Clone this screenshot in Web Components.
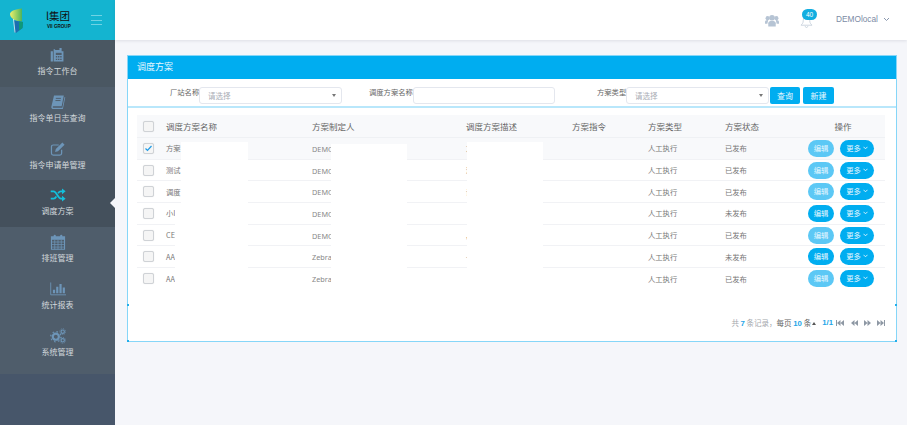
<!DOCTYPE html>
<html lang="zh">
<head>
<meta charset="utf-8">
<title>调度方案</title>
<style>
  html, body { margin: 0; height: 425px; overflow: hidden; background: #f5f6fa; }
  body { font-family: "Liberation Sans", "Noto Sans CJK SC", sans-serif; display: flex; width: 907px; }
</style>
</head>
<body>
<side-bar>
  <side-item icon="phone">指令工作台</side-item>
  <side-item icon="book">指令单日志查询</side-item>
  <side-item icon="edit">指令申请单管理</side-item>
  <side-item icon="shuffle" active>调度方案</side-item>
  <side-item icon="calendar">排班管理</side-item>
  <side-item icon="chart">统计报表</side-item>
  <side-item icon="cogs" last>系统管理</side-item>
</side-bar>
<main-area>
  <top-bar></top-bar>
  <plan-panel>
    <filter-bar></filter-bar>
    <plan-table>
      <plan-row name="方案" maker="DEMO" desc="方案" type="人工执行" status="已发布" checked selected></plan-row>
      <plan-row name="测试" maker="DEMO" desc="测试" type="人工执行" status="已发布"></plan-row>
      <plan-row name="调度" maker="DEMO" desc="调度" type="人工执行" status="已发布"></plan-row>
      <plan-row name="小I" maker="DEMO" type="人工执行" status="未发布" live></plan-row>
      <plan-row name="CE" maker="DEMO" desc="," type="人工执行" status="已发布"></plan-row>
      <plan-row name="AA" maker="Zebra" desc="-" type="人工执行" status="未发布" live></plan-row>
      <plan-row name="AA" maker="Zebra" type="人工执行" status="已发布" last></plan-row>
    </plan-table>
    <page-bar></page-bar>
  </plan-panel>
</main-area>

<script>
const ICONS = {
  phone: `<path d="M1 6h3v14H1zM5 3h2v1h6V1.500h3V6h2.500v14H5z" fill="currentColor"/><rect x="8" y="8" width="8" height="3" fill="#4f5d6b"/><path d="M8 12.500h2v2H8zm3 0h2v2h-2zm3 0h2v2h-2zM8 16h2v2H8zm3 0h2v2h-2zm3 0h2v2h-2z" fill="#4f5d6b"/>`,
  book: `<path d="M5.500 2H19l-3 15H4.500c-1 0-1 2 0 2H17l3-15 1 .5-3.300 16H3.500C2 20.500 1.500 19 2 17z" fill="currentColor"/><path d="M8 6h7M7.500 9h7" stroke="#4f5d6b" stroke-width="1.300"/>`,
  edit: `<path d="M16 12v5a2.500 2.500 0 0 1-2.500 2.500h-9A2.500 2.500 0 0 1 2 17V8a2.500 2.500 0 0 1 2.500-2.500H12" fill="none" stroke="currentColor" stroke-width="1.700"/><path d="M8 11l9-9 3 3-9 9-4 1z" fill="currentColor"/>`,
  shuffle: `<path d="M1 6h4c4 0 6 10 10 10h2M1 16h4c1.500 0 2.800-1.300 3.800-3M11 8.500C12.200 7 13.500 6 15 6h2" fill="none" stroke="currentColor" stroke-width="2.400"/><path d="M16.500 2l5 4-5 4zM16.500 12l5 4-5 4z" fill="currentColor"/>`,
  calendar: `<path d="M2 4h18v17H2z" fill="none" stroke="currentColor" stroke-width="1.500"/><path d="M2 4h18v4H2z" fill="currentColor"/><rect x="5" y="1" width="3" height="5" rx="1.500" fill="currentColor"/><rect x="14" y="1" width="3" height="5" rx="1.500" fill="currentColor"/><path d="M2 11h18M2 14.500h18M2 18h18M6.500 8v13M11 8v13M15.500 8v13" stroke="currentColor" stroke-width="1"/>`,
  chart: `<path d="M1 2v17h21" fill="none" stroke="currentColor" stroke-width="1.200"/><path d="M4 12h3v5H4zM8.500 8h3v9h-3zM13 4h3v13h-3zM17.500 9h3v8h-3z" fill="currentColor"/>`,
  cogs: `<g fill="none" stroke="currentColor"><circle cx="8" cy="12" r="4.200" stroke-width="3"/><circle cx="8" cy="12" r="7" stroke-width="1.600" stroke-dasharray="2.200 3.300"/><circle cx="17.500" cy="5" r="2.300" stroke-width="1.600"/><circle cx="17.500" cy="5" r="4" stroke-width="1.100" stroke-dasharray="1.500 1.600"/><circle cx="17.500" cy="17" r="2.300" stroke-width="1.600"/><circle cx="17.500" cy="17" r="4" stroke-width="1.100" stroke-dasharray="1.500 1.600"/></g>`
};

class SideBar extends HTMLElement {
  constructor() {
    super();
    this.attachShadow({mode: 'open'}).innerHTML = `
    <style>
      :host { display: flex; flex-direction: column; width: 115px; height: 425px; flex: none; background: #47566a; }
      .logo { height: 40px; background: #14b4d0; display: flex; align-items: center; flex: none; }
      svg.mark { margin-left: 9px; flex: none; }
      .brand { margin-left: 23px; width: 30px; color: #111; text-align: left; }
      .brand b { display: block; font: 400 10.500px/13px "Noto Sans CJK SC", sans-serif; white-space: nowrap; margin-left: -1px; margin-top: -1px; }
      .brand i { display: block; font: 700 4.600px/7px "Liberation Sans", sans-serif; font-style: normal; white-space: nowrap; margin-top: 1px; }
      .burger { margin-left: 14px; width: 11px; height: 8px; border-top: 1px solid #6fd3e4; border-bottom: 1px solid #6fd3e4; position: relative; }
      .burger::after { content: ""; position: absolute; left: 0; right: 0; top: 3.500px; height: 1px; background: #6fd3e4; }
      .list { display: flex; flex-direction: column; }
      .list ::slotted(side-item:first-child) { background: #4a5762; }
    </style>
    <div class="logo">
      <svg class="mark" width="15" height="25" viewBox="0 0 15 25">
        <defs><linearGradient id="lg" x1="0" y1="0" x2="1" y2="0"><stop offset="0" stop-color="#eef06a"/><stop offset="1" stop-color="#4fb35c"/></linearGradient></defs>
        <path d="M1 6C1 3 7 1 13 .500V13.500C8 13.500 1 11 1 6z" fill="url(#lg)"/>
        <path d="M5 12.500l9 1.500-.500 6L7 25l-1.500-1z" fill="#1a6fb0"/>
        <path d="M10 13.500l4 .5-.500 6-3.500 2.500z" fill="#0d9a78"/>
        <path d="M4.500 11L6 24.500" stroke="#e8f6f8" stroke-width=".8" fill="none"/>
      </svg>
      <div class="brand"><b>l集团</b><i>VII GROUP</i></div>
      <div class="burger"></div>
    </div>
    <div class="list"><slot></slot></div>`;
  }
}
customElements.define('side-bar', SideBar);

class SideItem extends HTMLElement {
  constructor() {
    super();
    this.attachShadow({mode: 'open'});
  }
  connectedCallback() {
    const icon = this.getAttribute('icon');
    this.shadowRoot.innerHTML = `
    <style>
      :host { display: flex; flex-direction: column; align-items: center; height: 46.800px; box-sizing: border-box; padding-top: 7px; background: #4f5d6b; position: relative; color: #d3d8dc; }
      :host([active]) { background: #44505c; }
      :host([last]) { height: 53px; }
      svg { width: 16px; height: 16px; color: #6d95b8; display: block; }
      :host([active]) svg { color: #12c0dc; }
      span { font: 8px/12px "Noto Sans CJK SC", sans-serif; margin-top: 2px; white-space: nowrap; }
      .tip { position: absolute; right: 0; top: 18px; width: 0; height: 0; border: 5px solid transparent; border-right-color: #f5f6fa; border-left-width: 0; display: none; }
      :host([active]) .tip { display: block; }
    </style>
    <svg viewBox="0 0 22 22">${ICONS[icon]}</svg>
    <span><slot></slot></span>
    <div class="tip"></div>`;
  }
}
customElements.define('side-item', SideItem);

class MainArea extends HTMLElement {
  constructor() {
    super();
    this.attachShadow({mode: 'open'}).innerHTML = `
    <style>:host { display: flex; flex-direction: column; flex: 1; min-width: 0; height: 425px; }</style>
    <slot></slot>`;
  }
}
customElements.define('main-area', MainArea);

class TopBar extends HTMLElement {
  constructor() {
    super();
    this.attachShadow({mode: 'open'}).innerHTML = `
    <style>
      :host { display: flex; align-items: center; height: 40px; flex: none; background: #fff; box-shadow: 0 1px 3px rgba(60,70,90,.13); box-sizing: border-box; padding-left: 650px; color: #7c8ba5; position: relative; }
      .bell { position: relative; margin-left: 21px; width: 13px; height: 13px; margin-top: 3px; }
      .bell svg { display: block; }
      .badge { position: absolute; left: 2px; top: -6px; width: 15px; height: 11px; border-radius: 6px; background: #12aee0; color: #fff; font: 6.500px/11px "Liberation Sans", sans-serif; text-align: center; }
      .name { font: 8.300px/12px "Liberation Sans", sans-serif; margin: -2px 0 0 23px; white-space: nowrap; }
      svg.chev { margin: -1px 0 0 5px; }
    </style>
    <svg width="14" height="13" viewBox="0 0 15 13"><g fill="#b6c4d4"><circle cx="7.500" cy="3.500" r="3"/><circle cx="2.800" cy="4" r="2.200"/><circle cx="12.200" cy="4" r="2.200"/><path d="M3.500 13V9.500C3.500 7.500 5 7 7.500 7s4 .5 4 2.500V13z"/><path d="M0 10V8c0-1 1-2 2.800-2h.7L2.500 10zM15 10V8c0-1-1-2-2.800-2h-.7l1 4z"/></g></svg>
    <div class="bell">
      <svg width="13" height="13" viewBox="0 0 14 14"><path d="M7 1.500C4.500 1.500 3.500 3.500 3.500 6c0 3-1.500 4-2.500 5h12c-1-1-2.500-2-2.500-5 0-2.500-1-4.500-3.500-4.500zM5.500 12c.3 1 .8 1.500 1.500 1.500s1.200-.5 1.500-1.500" fill="none" stroke="#c3ced9" stroke-width=".9"/></svg>
      <div class="badge">40</div>
    </div>
    <div class="name">DEMOlocal</div>
    <svg class="chev" width="7" height="5" viewBox="0 0 7 5"><path d="M1 1l2.500 2.500L6 1" fill="none" stroke="#7c8ba5" stroke-width=".9"/></svg>`;
  }
}
customElements.define('top-bar', TopBar);

class PlanPanel extends HTMLElement {
  constructor() {
    super();
    this.attachShadow({mode: 'open'}).innerHTML = `
    <style>
      :host { display: block; margin: 15px 10px 0 12px; height: 287px; box-sizing: border-box; background: #fff; border: 1px solid #86d6f8; position: relative; }
      .head { height: 23px; background: #00adf0; color: #e8f8ff; font: 9px/21px "Noto Sans CJK SC", sans-serif; padding-left: 9px; }
      .tick { position: absolute; width: 2px; height: 2px; background: #22aeea; }
    </style>
    <div class="head">调度方案</div>
    <slot></slot>
    <i class="tick" style="left:-1px;top:248px"></i><i class="tick" style="right:-1px;top:248px"></i>
    <i class="tick" style="left:-1px;bottom:-1px"></i><i class="tick" style="right:-1px;bottom:-1px"></i>`;
  }
}
customElements.define('plan-panel', PlanPanel);

class SelectBox extends HTMLElement {
  constructor() {
    super();
    this.attachShadow({mode: 'open'}).innerHTML = `
    <style>
      :host { display: flex; align-items: center; justify-content: space-between; width: 143px; height: 17px; box-sizing: border-box; border: 1px solid #e4e7ee; border-radius: 3px; background: #fff; padding: 0 5px 0 8px; color: #a9adb5; font: 7.500px/15px "Noto Sans CJK SC", sans-serif; flex: none; }
      i { width: 0; height: 0; border: 2px solid transparent; border-top: 3px solid #777; border-bottom: 0; }
    </style>
    <span><slot></slot></span><i></i>`;
  }
}
customElements.define('select-box', SelectBox);

class FilterBar extends HTMLElement {
  constructor() {
    super();
    this.attachShadow({mode: 'open'}).innerHTML = `
    <style>
      :host { display: flex; align-items: flex-start; height: 29px; box-sizing: border-box; padding: 8px 0 0 42px; border-bottom: 2px solid #b9e7fb; color: #666; }
      label { font: 7.300px/10px "Noto Sans CJK SC", sans-serif; white-space: nowrap; flex: none; }
      .input { width: 142px; height: 17px; box-sizing: border-box; border: 1px solid #e4e7ee; border-radius: 3px; flex: none; }
      button { height: 17px; border: 0; border-radius: 2px; background: #00adf0; color: #e8f8ff; font: 8px/17px "Noto Sans CJK SC", sans-serif; padding: 0; flex: none; }
    </style>
    <label style="width:29px">厂站名称</label>
    <select-box>请选择</select-box>
    <label style="margin-left:27px;width:44px">调度方案名称</label>
    <div class="input"></div>
    <label style="margin-left:42px;width:29px">方案类型</label>
    <select-box>请选择</select-box>
    <button style="width:30px;margin-left:1px">查询</button>
    <button style="width:31px;margin-left:3px">新建</button>`;
  }
}
customElements.define('filter-bar', FilterBar);

const COLS = '29px 146px 154px 106px 76px 77px 83px 77px';

class CheckMark extends HTMLElement {
  constructor() {
    super();
    this.attachShadow({mode: 'open'}).innerHTML = `
    <style>
      :host { display: block; width: 9px; height: 9px; margin-left: 6px; border: 1px solid #cfd2d6; border-radius: 2px; background: #f5f5f5; box-shadow: 0 0 1px #ddd; }
      svg { display: none; }
      :host([checked]) svg { display: block; }
    </style>
    <svg width="9" height="9" viewBox="0 0 9 9"><path d="M1.500 4.500l2 2 4-4.500" fill="none" stroke="#1e9be6" stroke-width="1.200"/></svg>`;
  }
}
customElements.define('check-mark', CheckMark);

class PlanTable extends HTMLElement {
  constructor() {
    super();
    this.attachShadow({mode: 'open'}).innerHTML = `
    <style>
      :host { display: block; margin: 7px 11px 0 9px; position: relative; height: 175px; }
      .head { display: grid; grid-template-columns: ${COLS}; align-items: center; height: 23px; background: #f8f9fb; color: #666; font: 8.500px/23px "Noto Sans CJK SC", sans-serif; border-bottom: 1px solid #eff1f4; box-sizing: border-box; }
      .head span:last-child { text-align: center; padding-right: 7px; }
      .mask { position: absolute; background: #fff; }
    </style>
    <div class="head">
      <span><check-mark></check-mark></span><span>调度方案名称</span><span>方案制定人</span><span>调度方案描述</span><span>方案指令</span><span>方案类型</span><span>方案状态</span><span>操作</span>
    </div>
    <slot></slot>
    <!-- blanked out areas of the original capture -->
    <div class="mask" style="left:44px;top:27px;width:67px;height:61px"></div>
    <div class="mask" style="left:38px;top:88px;width:73px;height:85px"></div>
    <div class="mask" style="left:194px;top:29px;width:76px;height:147px"></div>
    <div class="mask" style="left:330px;top:27px;width:76px;height:149px"></div>`;
  }
}
customElements.define('plan-table', PlanTable);

class PlanRow extends HTMLElement {
  constructor() {
    super();
    this.attachShadow({mode: 'open'});
  }
  connectedCallback() {
    const a = n => this.getAttribute(n) || '';
    this.shadowRoot.innerHTML = `
    <style>
      :host { display: grid; grid-template-columns: ${COLS}; align-items: center; height: 21.700px; box-sizing: border-box; border-bottom: 1px solid #f1f2f5; color: #777; font: 7.300px/12px "Noto Sans CJK SC", "Liberation Sans", sans-serif; }
      :host([selected]) { background: #f8f9fb; }
      :host([last]) { border-bottom: 0; }
      .latin { font-family: "Noto Sans", sans-serif; color: #888; padding-top: 1px; }
      .ops { display: flex; gap: 6px; }
      .btn { height: 17px; border-radius: 9px; background: #00adf0; color: #e6f7ff; font: 7.300px/17px "Noto Sans CJK SC", sans-serif; text-align: center; border: 0; padding: 0; }
      .edit { width: 26px; background: #5cc8f5; }
      :host([live]) .edit { background: #00adf0; }
      .more { width: 34px; }
      .more svg { margin-left: 2px; vertical-align: 1px; }
    </style>
    <span><check-mark ${this.hasAttribute('checked') ? 'checked' : ''}></check-mark></span>
    <span>${a('name')}</span>
    <span class="latin">${a('maker')}</span>
    <span>${a('desc')}</span>
    <span></span>
    <span>${a('type')}</span>
    <span>${a('status')}</span>
    <span class="ops"><button class="btn edit">编辑</button><button class="btn more">更多<svg width="5" height="4" viewBox="0 0 5 4"><path d="M.5 .8l2 2 2-2" fill="none" stroke="#fff" stroke-width=".8"/></svg></button></span>`;
  }
}
customElements.define('plan-row', PlanRow);

class PageBar extends HTMLElement {
  constructor() {
    super();
    this.attachShadow({mode: 'open'}).innerHTML = `
    <style>
      :host { display: flex; justify-content: flex-end; align-items: center; margin: 27px 11px 0 0; height: 12px; color: #a5a8ad; font: 7.500px/12px "Noto Sans CJK SC", "Liberation Sans", sans-serif; white-space: nowrap; }
      b { color: #1ea5e8; font: 700 7.800px/12px "Liberation Sans", sans-serif; }
      .dark { color: #666; }
      i { display: inline-block; width: 0; height: 0; border: 2px solid transparent; border-bottom: 3px solid #555; border-top: 0; margin: 0 6px 0 1px; }
      svg { display: block; margin-left: 6px; }
    </style>
    <span>共 <b>7</b> 条记录，</span><span class="dark">每页 <b>10</b> 条</span><i></i><b>1/1</b>
    <svg style="margin-left:3px" width="8" height="6" viewBox="0 0 8 6"><path d="M0 0h1v6H0zM4.500 0v6L1 3zM8 0v6L4.500 3z" fill="#8e98a4"/></svg>
    <svg style="margin-left:7px" width="7" height="6" viewBox="0 0 7 6"><path d="M3.500 0v6L0 3zM7 0v6L3.500 3z" fill="#8e98a4"/></svg>
    <svg width="7" height="6" viewBox="0 0 7 6"><path d="M0 0v6l3.500-3zM3.500 0v6L7 3z" fill="#8e98a4"/></svg>
    <svg width="8" height="6" viewBox="0 0 8 6"><path d="M0 0v6l3.500-3zM3.500 0v6L7 3zM7 0h1v6H7z" fill="#8e98a4"/></svg>`;
  }
}
customElements.define('page-bar', PageBar);
</script>
</body>
</html>
